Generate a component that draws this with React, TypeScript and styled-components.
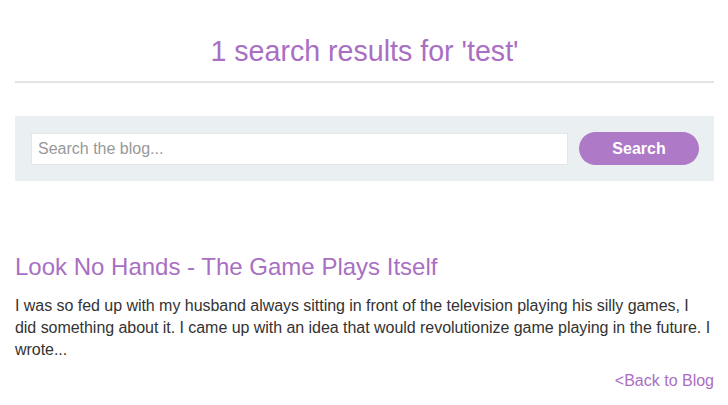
import React from 'react';
import styled, { createGlobalStyle } from 'styled-components';

const GlobalStyle = createGlobalStyle`
  html, body {
    margin: 0;
    padding: 0;
    background: #fff;
  }
  body {
    font-family: 'Liberation Sans', Arial, sans-serif;
    color: #333;
  }
`;

const purple = '#a96fc3';

const Page = styled.div`
  padding: 0 14px 0 15px;
`;

const Heading = styled.h1`
  margin: 0;
  padding-top: 34px;
  padding-bottom: 13px;
  text-align: center;
  font-weight: normal;
  font-size: 28.6px;
  line-height: 34px;
  color: ${purple};
  border-bottom: 2px solid #e4e4e4;
`;

const SearchPanel = styled.form`
  margin-top: 33px;
  background: #eaeff2;
  height: 65px;
  padding: 0 15px 0 16px;
  display: flex;
  align-items: center;
  gap: 11px;
  box-sizing: border-box;
`;

const SearchInput = styled.input`
  flex: 1;
  height: 32px;
  box-sizing: border-box;
  border: 1px solid #e2e6e8;
  background: #fff;
  padding: 0 6px;
  font-family: inherit;
  font-size: 16px;
  color: #333;
  outline: none;

  &::placeholder {
    color: #999;
  }
`;

const SearchButton = styled.button`
  width: 120px;
  height: 33px;
  border: none;
  border-radius: 17px;
  background: #ae79c6;
  color: #fff;
  font-family: inherit;
  font-weight: bold;
  font-size: 16px;
  cursor: pointer;
`;

const Result = styled.article`
  margin-top: 72px;
`;

const ResultTitle = styled.h2`
  margin: 0;
  font-weight: normal;
  font-size: 24px;
  line-height: 28px;
  color: ${purple};
`;

const ResultText = styled.p`
  margin: 14px 0 0;
  font-size: 16px;
  line-height: 22px;
  letter-spacing: -0.04px;
  color: #333;
`;

const BackLink = styled.a`
  display: block;
  margin-top: 11px;
  text-align: right;
  font-size: 16px;
  color: ${purple};
  text-decoration: none;
`;

export default function App() {
  return (
    <Page>
      <GlobalStyle />
      <Heading>1 search results for 'test'</Heading>
      <SearchPanel onSubmit={(e) => e.preventDefault()}>
        <SearchInput type="text" placeholder="Search the blog..." />
        <SearchButton type="submit">Search</SearchButton>
      </SearchPanel>
      <Result>
        <ResultTitle>Look No Hands - The Game Plays Itself</ResultTitle>
        <ResultText>
          I was so fed up with my husband always sitting in front of the television playing his silly games, I
          did something about it. I came up with an idea that would revolutionize game playing in the future. I
          wrote...
        </ResultText>
        <BackLink href="#">&lt;Back to Blog</BackLink>
      </Result>
    </Page>
  );
}
